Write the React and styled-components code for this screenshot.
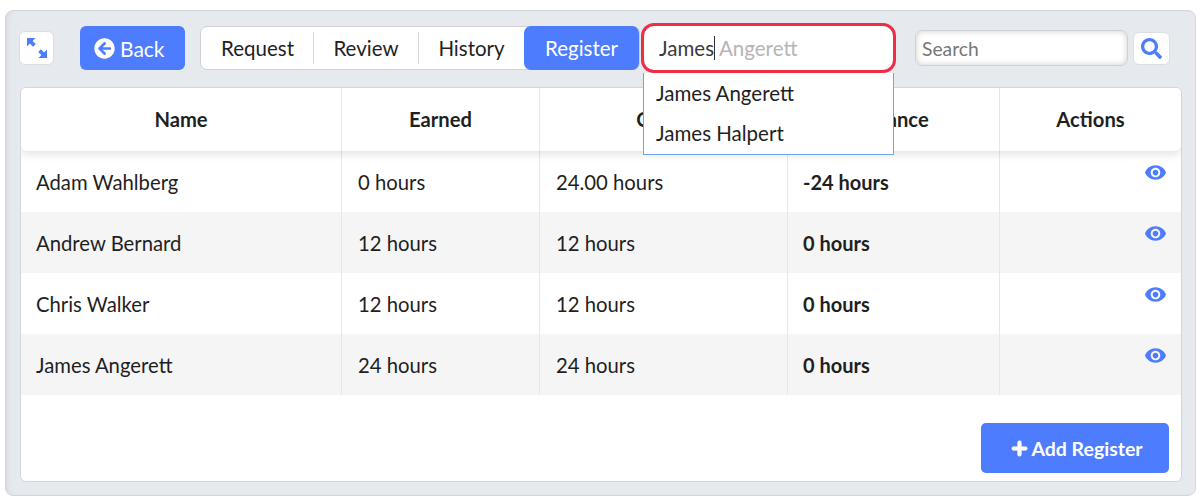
import React from 'react';
import styled, { createGlobalStyle } from 'styled-components';
import { FaArrowCircleLeft, FaPlus, FaSearch } from 'react-icons/fa';
import { MdVisibility } from 'react-icons/md';

const rows = [
  { name: 'Adam Wahlberg', earned: '0 hours', owed: '24.00 hours', balance: '-24 hours' },
  { name: 'Andrew Bernard', earned: '12 hours', owed: '12 hours', balance: '0 hours' },
  { name: 'Chris Walker', earned: '12 hours', owed: '12 hours', balance: '0 hours' },
  { name: 'James Angerett', earned: '24 hours', owed: '24 hours', balance: '0 hours' },
];

const GlobalStyle = createGlobalStyle`
  html, body {
    margin: 0;
    background: #fff;
    font-family: Lato, "Liberation Sans", sans-serif;
    color: #1f1f1f;
  }
  * {
    box-sizing: border-box;
  }
`;

const Page = styled.div`
  width: 1200px;
  height: 503px;
  padding: 10px 4px 7px 5px;
`;

const Panel = styled.div`
  height: 486px;
  padding: 12px 13px 13px 14px;
  background: #e6e9ee;
  border: 1px solid #d3d5d9;
  border-radius: 8px;
  box-shadow: inset 4px 0 6px -3px rgba(0, 0, 0, 0.08);
`;

const Toolbar = styled.div`
  display: flex;
  align-items: center;
  height: 50px;
  margin: 0 0 14px -1px;
`;

const IconButton = styled.button`
  display: flex;
  align-items: center;
  justify-content: center;
  width: ${(p) => p.$width}px;
  height: ${(p) => p.$height}px;
  margin-left: ${(p) => p.$left || 0}px;
  padding: 0;
  background: #fff;
  border: 1px solid #dcdee2;
  border-radius: 6px;
  color: #4d7cfe;
`;

const BackButton = styled.button`
  display: flex;
  align-items: center;
  gap: 5px;
  width: 105px;
  height: 44px;
  margin-left: 26px;
  padding: 0 0 0 14px;
  background: #4d7cfe;
  border: 0;
  border-radius: 6px;
  color: #fff;
  font: 400 21px Lato, sans-serif;
`;

const Tabs = styled.div`
  display: flex;
  align-items: center;
  width: 440px;
  height: 44px;
  margin-left: 15px;
  padding-left: 1px;
  background: #fff;
  border: 1px solid #cfd1d5;
  border-radius: 7px;
`;

const Tab = styled.div`
  display: flex;
  align-items: center;
  justify-content: center;
  flex: none;
  width: ${(p) => p.$width}px;
  height: 32px;
  font-size: 20.5px;
  border-right: ${(p) => (p.$divider ? '1px solid #d5d7da' : '0')};
`;

const ActiveTab = styled.div`
  display: flex;
  align-items: center;
  justify-content: center;
  width: 115px;
  height: 44px;
  margin: -1px 0;
  background: #4d7cfe;
  border-radius: 7px;
  color: #fff;
  font-size: 20.5px;
`;

const Typeahead = styled.div`
  position: relative;
  width: 255px;
  height: 50px;
  margin-left: 1px;
`;

const TypeaheadField = styled.div`
  position: relative;
  z-index: 2;
  display: flex;
  align-items: center;
  height: 50px;
  padding-left: 15px;
  background: #fff;
  border: 3px solid #ef2d45;
  border-radius: 13px;
  font-size: 20.5px;
  color: #3a3a3a;
`;

const Caret = styled.span`
  width: 1px;
  height: 24px;
  margin: 0 1px 0 0;
  background: #333;
`;

const Hint = styled.span`
  color: #b5b5b5;
  margin-left: 3px;
`;

const Dropdown = styled.div`
  position: absolute;
  z-index: 3;
  top: 50px;
  left: 2px;
  width: 251px;
  height: 82px;
  background: #fff;
  border: 1px solid #6ca5ee;
  border-top: 0;
`;

const Option = styled.div`
  display: flex;
  align-items: center;
  height: 40px;
  padding: 0 0 1px 12px;
  font-size: 20.5px;
`;

const SearchInput = styled.div`
  display: flex;
  align-items: center;
  width: 213px;
  height: 36px;
  margin-left: 19px;
  padding-left: 6px;
  background: #fff;
  border: 1px solid #cfd1d5;
  border-radius: 7px;
  box-shadow: inset 0 0 6px rgba(0, 0, 0, 0.2);
  color: #777;
  font-size: 19.3px;
`;

const Card = styled.div`
  position: relative;
  width: 1162px;
  height: 395px;
  background: #fff;
  border: 1px solid #d3d5d9;
  border-radius: 6px;
  overflow: hidden;
`;

const HeadRow = styled.div`
  position: relative;
  z-index: 1;
  display: grid;
  grid-template-columns: 321px 198px 248px 212px 1fr;
  height: 63px;
  background: #fff;
  border-radius: 0 0 6px 6px;
  box-shadow: 0 3px 10px rgba(0, 0, 0, 0.12);
`;

const HeadCell = styled.div`
  display: flex;
  align-items: center;
  justify-content: center;
  padding-bottom: 2px;
  font-size: 20.2px;
  font-weight: 700;
  border-right: 1px solid #e7e7e7;
  &:last-child {
    border-right: 0;
  }
`;

const Row = styled.div`
  display: grid;
  grid-template-columns: 321px 198px 248px 212px 1fr;
  height: 61px;
  background: ${(p) => (p.$shaded ? '#f5f5f5' : '#fff')};
`;

const Cell = styled.div`
  display: flex;
  align-items: center;
  padding-left: ${(p) => p.$pad || 16}px;
  font-size: ${(p) => (p.$bold ? 20 : 20.3)}px;
  font-weight: ${(p) => (p.$bold ? 700 : 400)};
  border-right: 1px solid #e7e7e7;
`;

const ActionCell = styled.div`
  display: flex;
  justify-content: flex-end;
  padding: 10px 14px 0 0;
  color: #4d7cfe;
  font-size: 23px;
`;

const Footer = styled.div`
  display: flex;
  justify-content: flex-end;
  padding: 28px 12px 0 0;
`;

const AddButton = styled.button`
  display: flex;
  align-items: center;
  justify-content: center;
  gap: 3px;
  width: 188px;
  height: 50px;
  padding: 0 0 0 4px;
  background: #4d7cfe;
  border: 0;
  border-radius: 5px;
  color: #fff;
  font: 700 19.5px Lato, sans-serif;
`;

const ExpandIcon = () => (
  <svg width="22" height="22" viewBox="0 0 22 22" fill="currentColor">
    <path d="M1 1h8.5L6.6 3.9l3.2 3.2-2.7 2.7-3.2-3.2L1 9.5z" />
    <path d="M21 21h-8.5l2.9-2.9-3.2-3.2 2.7-2.7 3.2 3.2 2.9-2.9z" />
  </svg>
);

export default function App() {
  return (
    <>
      <GlobalStyle />
      <Page>
        <Panel>
          <Toolbar>
            <IconButton $width={35} $height={34}>
              <ExpandIcon />
            </IconButton>
            <BackButton>
              <FaArrowCircleLeft size={21} />
              Back
            </BackButton>
            <Tabs>
              <Tab $width={112} $divider>Request</Tab>
              <Tab $width={105} $divider>Review</Tab>
              <Tab $width={105}>History</Tab>
              <ActiveTab>Register</ActiveTab>
            </Tabs>
            <Typeahead>
              <TypeaheadField>
                James
                <Caret />
                <Hint>Angerett</Hint>
              </TypeaheadField>
              <Dropdown>
                <Option>James Angerett</Option>
                <Option>James Halpert</Option>
              </Dropdown>
            </Typeahead>
            <SearchInput>Search</SearchInput>
            <IconButton $width={37} $height={33} $left={5}>
              <FaSearch size={21} />
            </IconButton>
          </Toolbar>
          <Card>
            <HeadRow>
              <HeadCell>Name</HeadCell>
              <HeadCell>Earned</HeadCell>
              <HeadCell>Owed</HeadCell>
              <HeadCell>Balance</HeadCell>
              <HeadCell>Actions</HeadCell>
            </HeadRow>
            {rows.map((row, i) => (
              <Row key={row.name} $shaded={i % 2 === 1}>
                <Cell $pad={15}>{row.name}</Cell>
                <Cell>{row.earned}</Cell>
                <Cell>{row.owed}</Cell>
                <Cell $bold $pad={15}>{row.balance}</Cell>
                <ActionCell>
                  <MdVisibility />
                </ActionCell>
              </Row>
            ))}
            <Footer>
              <AddButton>
                <FaPlus size={17} stroke="currentColor" strokeWidth={30} />
                Add Register
              </AddButton>
            </Footer>
          </Card>
        </Panel>
      </Page>
    </>
  );
}
